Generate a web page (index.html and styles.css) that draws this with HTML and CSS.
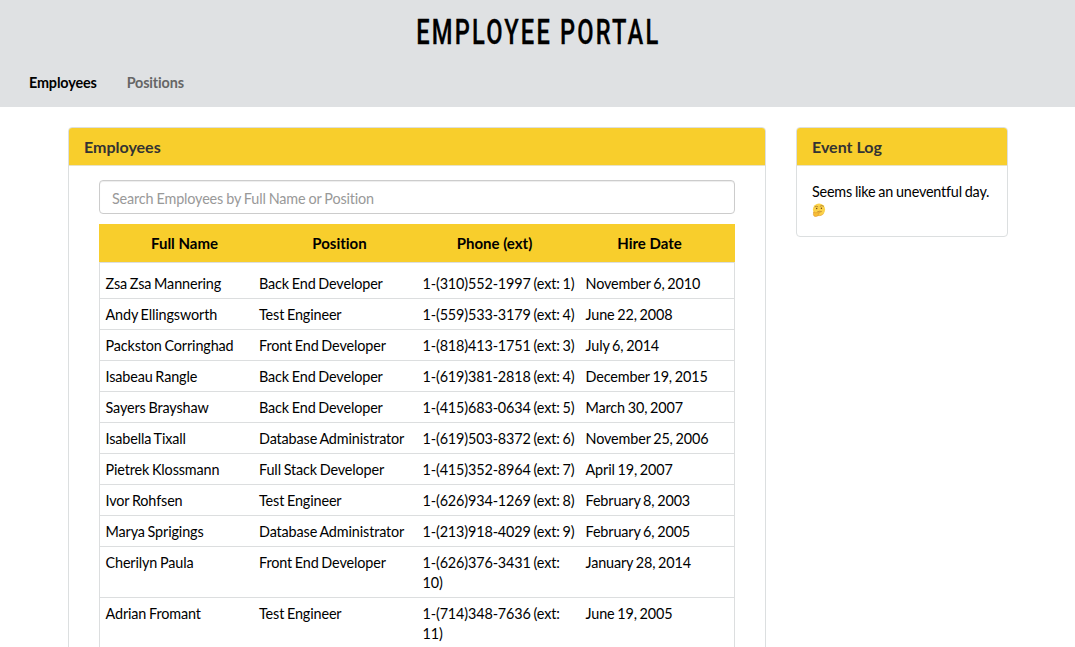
FILE: index.html
```
<!DOCTYPE html>
<html lang="en">
<head>
<meta charset="utf-8">
<title>Employee Portal</title>
<link rel="stylesheet" href="styles.css">
</head>
<body>
<header class="header">
  <h1 class="title"><span class="title-text">EMPLOYEE PORTAL</span></h1>
  <nav class="nav"><a class="nav-link active">Employees</a><a class="nav-link">Positions</a></nav>
</header>
<main class="content">
  <section class="panel panel-main">
    <h2 class="panel-heading">Employees</h2>
    <div class="panel-body">
      <input class="search" type="text" placeholder="Search Employees by Full Name or Position">
      <div class="table">
        <div class="thead"><span>Full Name</span><span>Position</span><span>Phone (ext)</span><span>Hire Date</span></div>
        <div class="tbody">
          <div class="row"><span>Zsa Zsa Mannering</span><span>Back End Developer</span><span>1-(310)552-1997 (ext: 1)</span><span>November 6, 2010</span></div>
          <div class="row"><span>Andy Ellingsworth</span><span>Test Engineer</span><span>1-(559)533-3179 (ext: 4)</span><span>June 22, 2008</span></div>
          <div class="row"><span>Packston Corringhad</span><span>Front End Developer</span><span>1-(818)413-1751 (ext: 3)</span><span>July 6, 2014</span></div>
          <div class="row"><span>Isabeau Rangle</span><span>Back End Developer</span><span>1-(619)381-2818 (ext: 4)</span><span>December 19, 2015</span></div>
          <div class="row"><span>Sayers Brayshaw</span><span>Back End Developer</span><span>1-(415)683-0634 (ext: 5)</span><span>March 30, 2007</span></div>
          <div class="row"><span>Isabella Tixall</span><span>Database Administrator</span><span>1-(619)503-8372 (ext: 6)</span><span>November 25, 2006</span></div>
          <div class="row"><span>Pietrek Klossmann</span><span>Full Stack Developer</span><span>1-(415)352-8964 (ext: 7)</span><span>April 19, 2007</span></div>
          <div class="row"><span>Ivor Rohfsen</span><span>Test Engineer</span><span>1-(626)934-1269 (ext: 8)</span><span>February 8, 2003</span></div>
          <div class="row"><span>Marya Sprigings</span><span>Database Administrator</span><span>1-(213)918-4029 (ext: 9)</span><span>February 6, 2005</span></div>
          <div class="row"><span>Cherilyn Paula</span><span>Front End Developer</span><span>1-(626)376-3431 (ext:<br>10)</span><span>January 28, 2014</span></div>
          <div class="row"><span>Adrian Fromant</span><span>Test Engineer</span><span>1-(714)348-7636 (ext:<br>11)</span><span>June 19, 2005</span></div>
        </div>
      </div>
    </div>
  </section>
  <aside class="panel panel-log">
    <h2 class="panel-heading">Event Log</h2>
    <div class="log-body">
      <div>Seems like an uneventful day.</div>
      <svg class="emoji" viewBox="0 0 14 14" role="img" aria-label="Thinking face">
        <circle cx="7" cy="6.6" r="6.1" fill="#fbd24a"/>
        <path d="M1.6 9.2A6.1 6.1 0 0 0 11.6 10.6" fill="none" stroke="#e9a83a" stroke-width=".8"/>
        <path d="M3 3.7q1.4-1 2.8-.1M8.2 3.1q1.7-1.3 3.3 0" fill="none" stroke="#8a5a20" stroke-width=".6" stroke-linecap="round"/>
        <ellipse cx="4.7" cy="5.5" rx=".7" ry=".8" fill="#6b4218"/>
        <ellipse cx="9.4" cy="5.3" rx=".7" ry=".8" fill="#6b4218"/>
        <path d="M5.6 8.7q2-.9 3.9-.2" fill="none" stroke="#a87028" stroke-width=".6" stroke-linecap="round"/>
        <path d="M1.7 9.2q.9-1 1.4.7l4.5-1q1.2.1.4.9l-2 .8q1.5.9 0 2.2-1.8 1.2-3.6.5-1.7-1-.7-4.1z" fill="#f8bd35" stroke="#d8902a" stroke-width=".5"/>
      </svg>
    </div>
  </aside>
</main>
</body>
</html>
```
FILE: styles.css
```
* { box-sizing: border-box; }
body { margin: 0; height: 647px; overflow: hidden; background: #fff; color: #000; font: 14.4px/20px Lato, sans-serif; font-variant-ligatures: none; }
.header { height: 107px; background: #dfe1e3; }
.title { margin: 0; height: 62px; padding: 2px 0 0 1px; display: flex; justify-content: center; font: 500 35px/62px Roboto, sans-serif; white-space: nowrap; }
.title-text { transform: scaleX(.677); letter-spacing: 3.2px; -webkit-text-stroke: .3px #000; }
.nav { display: flex; gap: 30px; padding: 10px 29px; font-size: 14.4px; font-weight: 700; letter-spacing: -.15px; line-height: 22px; }
.nav-link { color: #666; }
.nav-link.active { color: #000; }
.content { display: flex; align-items: flex-start; gap: 30px; padding: 20px 67px 0 68px; }
.panel { border: 1px solid #dcdfe0; border-radius: 4px; }
.panel-main { width: 698px; }
.panel-log { width: 212px; height: 110px; }
.panel-heading { margin: 0; height: 38px; padding: 0 15px; background: #f8ce2c; border-bottom: 1px solid #e8e2c4; border-radius: 3px 3px 0 0; font-size: 16px; line-height: 38px; font-weight: 700; color: #333; }
.panel-body { padding: 14px 30px 0; }
.search { display: block; width: 100%; height: 34px; padding: 7px 12px 5px; border: 1px solid #ccc; border-radius: 4px; font: 14.4px/20px Lato, sans-serif; font-variant-ligatures: none; letter-spacing: -.15px; word-spacing: -.5px; box-shadow: inset 0 1px 1px rgba(0,0,0,.075); }
.search::placeholder { color: #999; opacity: 1; }
.table { margin-top: 10px; }
.thead { display: grid; grid-template-columns: repeat(4, 155px); padding: 0 8px; height: 38px; background: #f8ce2c; text-align: center; font-size: 15px; font-weight: 700; line-height: 38px; }
.tbody { border: 1px solid #dcdedf; padding-top: 5px; }
.row { display: grid; grid-template-columns: 153.5px 163.5px 163px 1fr; padding: 6px 5px 4px 5.5px; border-bottom: 1px solid #dcdedf; letter-spacing: -.13px; word-spacing: -.8px; white-space: nowrap; }
.log-body { padding: 16px 15px 14px; letter-spacing: -.2px; word-spacing: -.6px; white-space: nowrap; }
.emoji { display: block; width: 14px; height: 14px; margin-top: 1px; }
```
